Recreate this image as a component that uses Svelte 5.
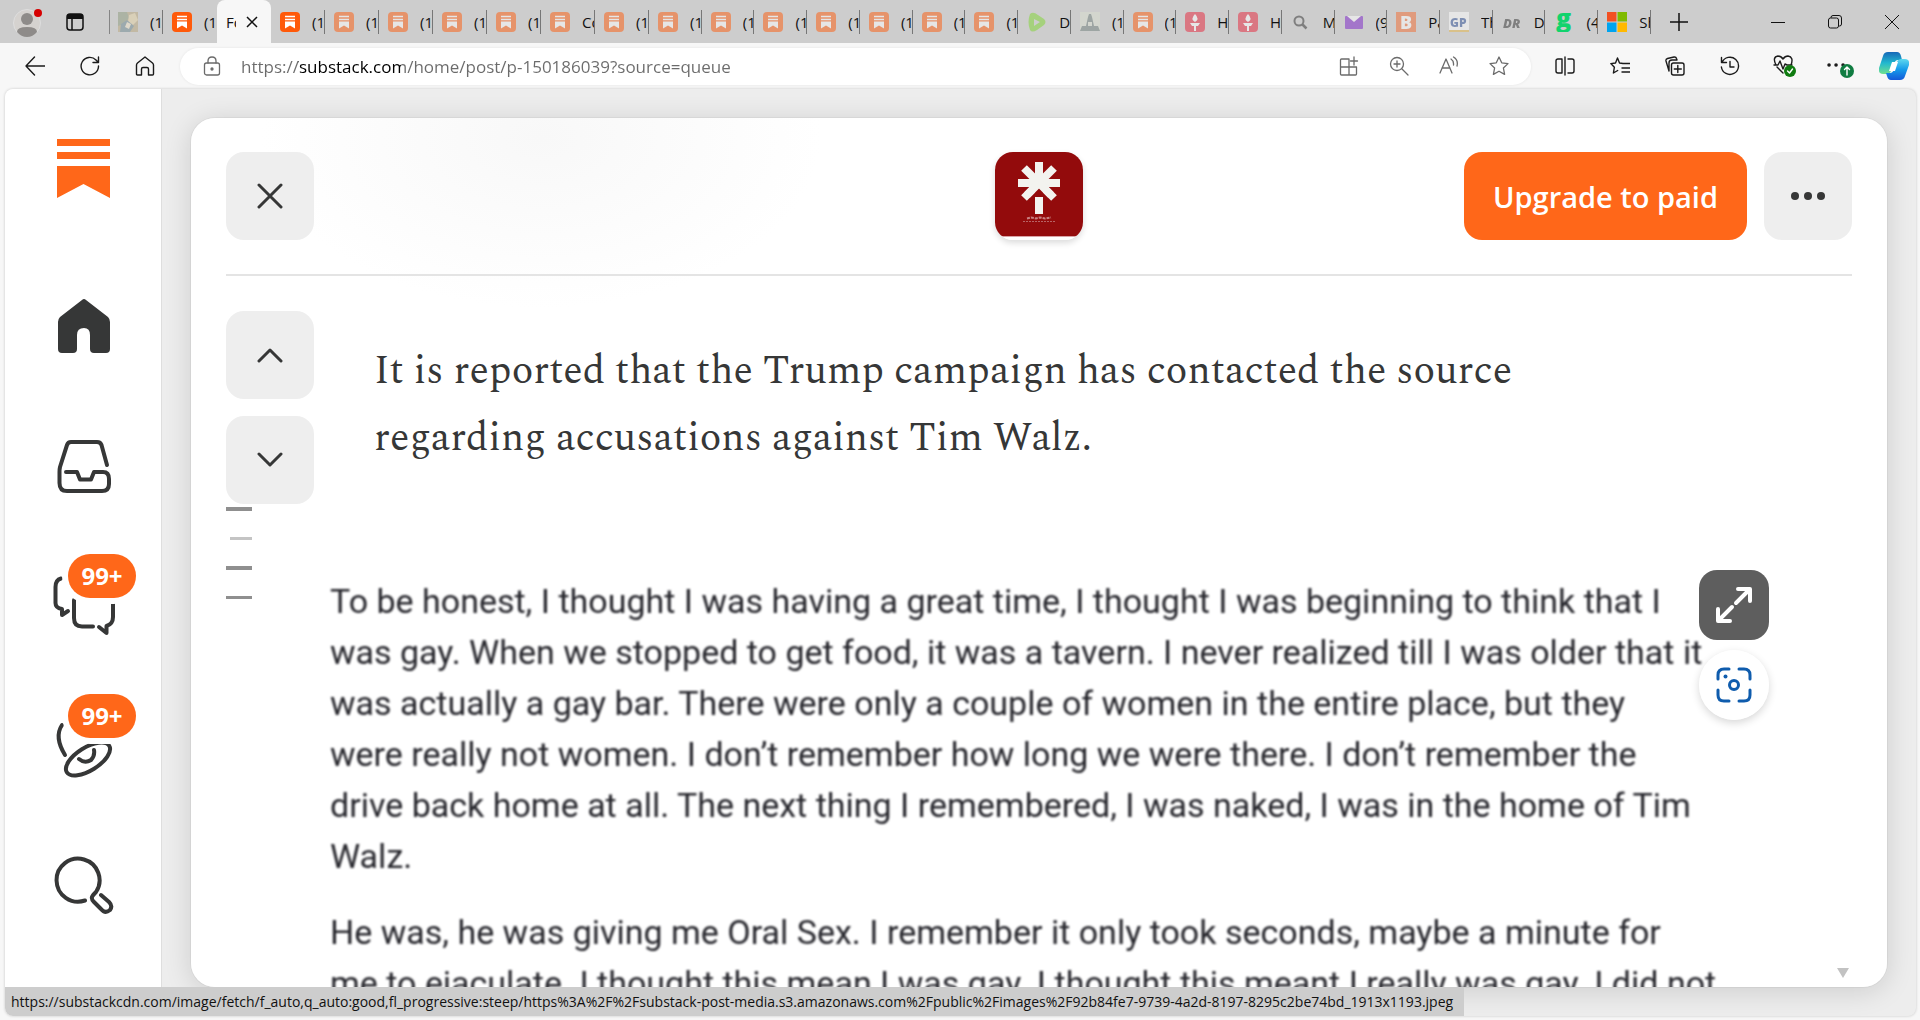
<script lang="ts">
  type Tab = { icon: string; label: string; awake?: boolean; wide?: boolean; active?: boolean };

  const tabs: Tab[] = [
    { icon: 'painting', label: '(1', wide: true },
    { icon: 'substack', label: '(1', awake: true, wide: true },
    { icon: '', label: 'Fo', active: true, wide: true },
    { icon: 'substack', label: '(1', awake: true, wide: true },
    { icon: 'substack', label: '(1', wide: true },
    { icon: 'substack', label: '(1', wide: true },
    { icon: 'substack', label: '(1', wide: true },
    { icon: 'substack', label: '(1', wide: true },
    { icon: 'substack', label: 'Co', wide: true },
    { icon: 'substack', label: '(1', wide: true },
    { icon: 'substack', label: '(1' },
    { icon: 'substack', label: '(1' },
    { icon: 'substack', label: '(1' },
    { icon: 'substack', label: '(1' },
    { icon: 'substack', label: '(1' },
    { icon: 'substack', label: '(1' },
    { icon: 'substack', label: '(1' },
    { icon: 'play', label: 'D' },
    { icon: 'statue', label: '(1' },
    { icon: 'substack', label: '(1' },
    { icon: 'torch', label: 'H' },
    { icon: 'torch', label: 'H' },
    { icon: 'search', label: 'M' },
    { icon: 'mail', label: '(9' },
    { icon: 'b', label: 'Pa' },
    { icon: 'gp', label: 'Th' },
    { icon: 'dr', label: 'D' },
    { icon: 'g', label: '(4', awake: true },
    { icon: 'windows', label: 'Sh', awake: true }
  ];

  const navItems = [
    { id: 'home', label: 'Home', badge: '' },
    { id: 'inbox', label: 'Inbox', badge: '' },
    { id: 'chat', label: 'Chat', badge: '99+' },
    { id: 'activity', label: 'Activity', badge: '99+' },
    { id: 'explore', label: 'Explore', badge: '' }
  ];

  const passages = [
    [
      'To be honest, I thought I was having a great time, I thought I was beginning to think that I',
      'was gay. When we stopped to get food, it was a tavern. I never realized till I was older that it',
      'was actually a gay bar. There were only a couple of women in the entire place, but they',
      'were really not women. I don’t remember how long we were there. I don’t remember the',
      'drive back home at all. The next thing I remembered, I was naked, I was in the home of Tim',
      'Walz.'
    ],
    [
      'He was, he was giving me Oral Sex. I remember it only took seconds, maybe a minute for',
      'me to ejaculate. I thought this mean I was gay. I thought this meant I really was gay. I did not'
    ]
  ];

  const statusUrl =
    'https://substackcdn.com/image/fetch/f_auto,q_auto:good,fl_progressive:steep/https%3A%2F%2Fsubstack-post-media.s3.amazonaws.com%2Fpublic%2Fimages%2F92b84fe7-9739-4a2d-8197-8295c2be74bd_1913x1193.jpeg';

  let address = 'https://substack.com/home/post/p-150186039?source=queue';
</script>

{#snippet favicon(name: string)}
  <svg class="favicon" viewBox="0 0 20 20" aria-hidden="true">
    {#if name === 'substack'}
      <rect width="20" height="20" rx="4" fill="#ff5a0a" />
      <path d="M5 4.5h10M5 7.5h10" stroke="#fff" stroke-width="1.5" />
      <path d="M5 9.5h10v7l-5-3-5 3z" fill="#fff" />
    {:else if name === 'painting'}
      <rect width="20" height="20" fill="#b9a77c" />
      <path d="M0 0h9l2 6-5 6-6 2z" fill="#8d9a7c" />
      <path d="M11 3l6-2 3 7-5 5-5-3z" fill="#e6d3a4" />
      <path d="M3 12l6-4 7 6-4 6H2z" fill="#6d8891" />
      <path d="M9 10l4 2-2 5-4-2z" fill="#efe4c8" />
    {:else if name === 'play'}
      <path d="M3 2q3-3 8 1l6 4q3 3 0 6l-7 5q-5 3-7 0Q0 10 3 2z" fill="#7fd62f" />
      <path d="M7 7l6 3-6 4z" fill="#cfcfcf" />
    {:else if name === 'statue'}
      <rect width="20" height="18" fill="#d9e0d0" />
      <path d="M9 2h2l1 3 2 9h4l2 5H0l2-5h4l2-9z" fill="#6e7e7a" />
      <path d="M8 10h4v4H8z" fill="#d9e0d0" />
    {:else if name === 'torch'}
      <rect width="20" height="20" rx="4" fill="#e8233a" />
      <path d="M10 2q5 5 0 8-5-3 0-8zM5 11h10l-2 3H7zM9 14h2v5H9z" fill="#fff" />
    {:else if name === 'search'}
      <circle cx="8" cy="9" r="4.500" fill="none" stroke="#333" stroke-width="2" />
      <path d="M11.500 12.500l4 4" stroke="#333" stroke-width="2.500" />
    {:else if name === 'mail'}
      <rect x="1" y="4" width="18" height="13" rx="1" fill="#7a22c9" />
      <path d="M3 4l7 6 7-6z" fill="#fff" />
    {:else if name === 'b'}
      <rect width="20" height="20" fill="#f46b30" />
      <text x="4" y="17" class="glyph" font-size="18" fill="#fff">B</text>
    {:else if name === 'gp'}
      <rect width="20" height="20" fill="#fff" />
      <path d="M0 19h20" stroke="#e5b64a" stroke-width="2" />
      <text x="1" y="15" class="glyph" font-size="12" fill="#31539a">GP</text>
    {:else if name === 'dr'}
      <text x="1" y="16" class="glyph" font-size="13" font-style="italic" fill="#333">DR</text>
    {:else if name === 'g'}
      <text x="2" y="15" class="glyph" font-size="25" fill="#12d36d">g</text>
    {:else if name === 'windows'}
      <path d="M0 0h9.500v9.500H0z" fill="#f25022" />
      <path d="M10.500 0H20v9.500h-9.500z" fill="#7fba00" />
      <path d="M0 10.500h9.500V20H0z" fill="#00a4ef" />
      <path d="M10.500 10.500H20V20h-9.500z" fill="#ffb900" />
    {/if}
  </svg>
{/snippet}

{#snippet navIcon(id: string)}
  <svg class="nav-icon" viewBox="0 0 64 64" aria-hidden="true">
    {#if id === 'home'}
      <path
        class="solid"
        d="M31 6Q33 4 35 6L57 23Q59 25 59 28V55Q59 59 55 59H43Q39 59 39 55V41Q39 34 33 34Q26 34 26 41V55Q26 59 22 59H11Q7 59 7 55V28Q7 25 9 23Z"
      />
    {:else if id === 'inbox'}
      <path d="M56 31L50.500 11Q49.500 8 46 8H20Q17 8 16 11L9 33Q8.500 35 8.500 38V49Q8.500 57 16 57H51Q58 57 58 50V45Q58 38 52 38H43L40 45.500H29L26 38H15" />
    {:else if id === 'chat'}
      <path d="M10 4.500Q4.500 6 4.500 13V29Q4.500 34 11 35V41L17 37" />
      <path d="M23 26V44Q23 52.500 31 52.500H42" />
      <path d="M62 20V43Q62 50 55.500 52V59L48 53" />
    {:else if id === 'activity'}
      <path d="M11 11Q3 23 14 41" />
      <ellipse cx="37" cy="45" rx="25" ry="11.500" transform="rotate(-32 37 45)" />
      <path d="M28 45Q34 50 40 46Q44 42 43 36" />
    {:else}
      <path d="M34 46.500A21.500 21.500 0 1 1 45 38C41 42 39 44 43 48L50 55Q54 60 59 56Q62 52 58 48L50 41" />
    {/if}
  </svg>
{/snippet}

<div class="browser">
  <div class="tabstrip">
    <button class="chrome-btn profile" aria-label="Profile">
      <svg width="32" height="32" viewBox="0 0 32 32">
        <circle cx="14" cy="17" r="13.500" fill="#d5d2cf" stroke="#dedede" />
        <circle cx="14" cy="13" r="6" fill="#8e8b89" />
        <path d="M4 26q0-5 10-5t10 5q-4 5-10 5t-10-5z" fill="#8e8b89" />
        <circle cx="25" cy="7" r="4" fill="#d60000" />
      </svg>
    </button>
    <button class="chrome-btn" aria-label="Tab actions">
      <svg width="20" height="20" viewBox="0 0 20 20">
        <rect x="2" y="2" width="16" height="16" rx="3" fill="none" stroke="#111" stroke-width="1.500" />
        <path d="M2 7V4q0-2 2-2h12q2 0 2 2v3z" fill="#111" />
        <path d="M7 7v11" stroke="#111" stroke-width="1.500" />
      </svg>
    </button>

    <div class="tabs" role="tablist">
      {#each tabs as tab, i}
        {#if tab.active}
          <div class="tab wide active" role="tab" aria-selected="true" tabindex="0">
            <span class="tab-label">{tab.label}</span>
            <button class="tab-close" aria-label="Close tab">
              <svg width="12" height="12" viewBox="0 0 12 12">
                <path d="M1 1l10 10M11 1L1 11" stroke="#111" stroke-width="1.500" />
              </svg>
            </button>
          </div>
        {:else}
          <button
            class="tab"
            class:wide={tab.wide}
            class:asleep={!tab.awake}
            class:no-line={tabs[i + 1]?.active}
            role="tab"
            aria-selected="false"
          >
            {@render favicon(tab.icon)}
            <span class="tab-label">{tab.label}</span>
          </button>
        {/if}
      {/each}
    </div>

    <button class="chrome-btn new-tab" aria-label="New tab">
      <svg width="18" height="18" viewBox="0 0 18 18"><path d="M9 0v18M0 9h18" stroke="#111" stroke-width="1.500" /></svg>
    </button>
    <div class="window-controls">
      <button aria-label="Minimize">
        <svg width="14" height="14" viewBox="0 0 14 14"><path d="M0 7.500h14" stroke="#111" /></svg>
      </button>
      <button aria-label="Restore">
        <svg width="14" height="14" viewBox="0 0 14 14" fill="none" stroke="#111">
          <rect x=".5" y="3" width="10" height="10" rx="2" />
          <path d="M3 3V2.500Q3 .5 5 .5h6q2.500 0 2.500 2.500v6q0 2-2 2H11" />
        </svg>
      </button>
      <button aria-label="Close">
        <svg width="14" height="14" viewBox="0 0 14 14"><path d="M0 0l14 14M14 0L0 14" stroke="#111" /></svg>
      </button>
    </div>
  </div>

  <div class="toolbar">
    <div class="nav-buttons">
      <button aria-label="Back">
        <svg class="tool" viewBox="0 0 20 20"><path d="M20 10H1M9.500 1L1 10l8.500 9" /></svg>
      </button>
      <button aria-label="Refresh">
        <svg class="tool" viewBox="0 0 20 20"><path d="M18.500 10A8.700 8.700 0 1 1 16 4l2.500 2.500M18.500 1v5.500H13" /></svg>
      </button>
      <button aria-label="Home">
        <svg class="tool" viewBox="0 0 20 20"><path d="M1.500 9q0-1 1-2L10 1l7.500 6q1 1 1 2v9q0 1-1 1h-4v-6q0-1.500-1.500-1.500H8Q6.500 11.500 6.500 13v6h-4q-1 0-1-1z" /></svg>
      </button>
    </div>

    <div class="address">
      <button aria-label="View site information">
        <svg class="tool grey" viewBox="0 0 20 20">
          <rect x="2.500" y="7" width="15" height="12" rx="2" />
          <path d="M6 7V5q0-4 4-4t4 4v2" />
          <circle cx="10" cy="13" r="1" fill="#666" />
        </svg>
      </button>
      <input type="text" aria-label="Address" bind:value={address} spellcheck="false" />
      <div class="address-actions">
        <button aria-label="App available">
          <svg class="tool grey" viewBox="0 0 20 20"><path d="M10 3H2.500Q1.500 3 1.500 4v14q0 1 1 1h14q1 0 1-1v-7h-16M10 3v16M15 1v8M11.500 5h7" /></svg>
        </button>
        <button aria-label="Zoom">
          <svg class="tool grey" viewBox="0 0 20 20"><circle cx="8" cy="8" r="6.500" /><path d="M13 13l6 6M8 5v6M5 8h6" /></svg>
        </button>
        <button aria-label="Read aloud">
          <svg class="tool grey" viewBox="0 0 20 20"><path d="M1 17L7 3l6 14M3 12h8M12 3q3 2 2.500 6M14.500 1q5 3 3.500 9" /></svg>
        </button>
        <button aria-label="Add to favorites">
          <svg class="tool grey" viewBox="0 0 20 20"><path d="M10 1l2.700 5.800 6.300.8-4.600 4.400 1.200 6.400L10 15.200l-5.600 3.200 1.200-6.400L1 7.600l6.300-.8z" /></svg>
        </button>
      </div>
    </div>

    <div class="extensions">
      <button aria-label="Split screen">
        <svg class="tool" viewBox="0 0 20 20"><path d="M7 3H3Q1 3 1 5v10q0 2 2 2h4zM10 1v18M13 3h4q2 0 2 2v10q0 2-2 2h-4" /></svg>
      </button>
      <button aria-label="Favorites">
        <svg class="tool" viewBox="0 0 20 20"><path d="M13 7.500L9.500 7 7.500 2 5.500 7 .8 7.600l3.600 3.600-1 5.800 4.300-2.500M13 7.500h7M12 12h8M12 16h8" /></svg>
      </button>
      <button aria-label="Collections">
        <svg class="tool" viewBox="0 0 20 20"><rect x="6.500" y="7" width="12.500" height="12" rx="2" /><path d="M12.800 9.500v7M9.300 13h7M4 15L1 5q-.4-2 1.500-2.500L9 1q2-.3 2.500 1.500L12 4H7Q4 4 4 7z" /></svg>
      </button>
      <button aria-label="History">
        <svg class="tool" viewBox="0 0 20 20"><path d="M2 6.500a8.600 8.600 0 1 1-.6 4.500M1.500 1.500v5h5M10 5.500V11h4" /></svg>
      </button>
      <button aria-label="Browser essentials">
        <svg class="tool badged" viewBox="0 0 24 24">
          <path d="M3 11Q-1 3 5 2q3 0 5 3 2-3 5-3 6 1 3 9M1 11h4l2-4 3 8 2-5 2 1h5M4 13l6 6" />
          <circle cx="17" cy="17" r="6" fill="#0f7b10" stroke="none" />
          <path d="M14.500 17l2 2 3-4" stroke="#fff" />
        </svg>
      </button>
      <button aria-label="Settings and more">
        <svg class="tool more" viewBox="0 0 28 24">
          <path d="M3 11h.1M10 11h.1M17 11h.1" stroke-width="3.500" />
          <circle cx="21" cy="17" r="7" fill="#107c41" stroke="none" />
          <path d="M21 21v-8M18.500 15.500L21 13l2.500 2.500" stroke="#fff" />
        </svg>
      </button>
      <button class="copilot" aria-label="Copilot">
        <svg width="30" height="28" viewBox="0 0 30 28">
          <defs>
            <linearGradient id="cpA" x1="0" y1="0" x2="0" y2="1">
              <stop offset="0" stop-color="#1668b8" />
              <stop offset=".5" stop-color="#22b8cf" />
              <stop offset="1" stop-color="#6fe08f" />
            </linearGradient>
            <linearGradient id="cpB" x1="0" y1="0" x2="0" y2="1">
              <stop offset="0" stop-color="#5fd9ee" />
              <stop offset=".5" stop-color="#159bea" />
              <stop offset="1" stop-color="#1459d8" />
            </linearGradient>
          </defs>
          <path d="M9 0h9q3 0 4 4l1 4h-4q-3 0-4 4l-3 7q-1 3-5 3H4q-5 0-4-6L4 4q1-4 5-4z" fill="url(#cpA)" />
          <path d="M21 28h-9q-3 0-4-4l-1-3h4q3 0 4-4l3-7q1-3 5-3h3q5 0 4 6l-4 11q-1 4-5 4z" fill="url(#cpB)" />
          <path d="M13 10h6l-3 9h-6z" fill="#fff" />
        </svg>
      </button>
    </div>
  </div>

  <div class="page">
    <nav class="sidebar" aria-label="Main">
      <a class="logo" href="#top" aria-label="Substack">
        <svg width="53" height="59" viewBox="0 0 53 59" fill="#ff6719">
          <path d="M0 0h53v7H0zM0 13h53v7H0zM0 27h53v32L26.500 45 0 59z" />
        </svg>
      </a>
      {#each navItems as item}
        <a class="nav-link" href="#{item.id}" aria-label={item.label}>
          {@render navIcon(item.id)}
          {#if item.badge}
            <span class="badge">{item.badge}</span>
          {/if}
        </a>
      {/each}
    </nav>

    <main class="reader">
      <header class="reader-header">
        <button class="square" aria-label="Close post">
          <svg width="26" height="26" viewBox="0 0 26 26"><path d="M2 2l22 22M24 2L2 24" /></svg>
        </button>
        <a class="publication" href="#publication" aria-label="Publication">
          <svg width="88" height="88" viewBox="0 0 88 88">
            <rect width="88" height="88" fill="#fff" />
            <path d="M0 0h88v84H0z" fill="#930b0c" />
            <path d="M0 84.500h88" stroke="#d9a3a6" />
            <path d="M44 10v21M23 31h42M29 16l30 30M59 16L29 46M44 45v17" stroke="#f3f3ef" stroke-width="8" />
            <path d="M32 66.500l4-1 5 1 4-1 5 1 6-1" stroke="#c98082" stroke-width="2" fill="none" stroke-dasharray="3 1" />
            <path d="M28 69.500h32" stroke="#b76365" stroke-dasharray="2 1" />
            <path d="M40 35h8v10h-8z" fill="#930b0c" />
            <path d="M44 31L32 43M44 31l12 12" stroke="#f3f3ef" stroke-width="8" />
          </svg>
        </a>
        <div class="header-actions">
          <button class="upgrade">Upgrade to paid</button>
          <button class="square" aria-label="More options">
            <svg width="34" height="8" viewBox="0 0 34 8" class="dots">
              <circle cx="4" cy="4" r="4" />
              <circle cx="17" cy="4" r="4" />
              <circle cx="30" cy="4" r="4" />
            </svg>
          </button>
        </div>
      </header>

      <div class="reader-body">
        <aside class="post-nav">
          <button class="square" aria-label="Previous post">
            <svg width="26" height="16" viewBox="0 0 26 16"><path d="M2 14L13 3l11 11" /></svg>
          </button>
          <button class="square" aria-label="Next post">
            <svg width="26" height="16" viewBox="0 0 26 16"><path d="M2 2l11 11L24 2" /></svg>
          </button>
          <div class="marks" aria-hidden="true">
            <span class="thick"></span>
            <span class="short"></span>
            <span class="thick"></span>
            <span></span>
          </div>
        </aside>

        <article>
          <p class="lead">
            It is reported that the Trump campaign has contacted the source<br />
            regarding accusations against Tim Walz.
          </p>
          <figure>
            <div class="scan">
              {#each passages as lines}
                <p>
                  {#each lines as line}
                    <span>{line}</span>
                  {/each}
                </p>
              {/each}
            </div>
            <div class="figure-tools">
              <button class="expand" aria-label="Expand image">
                <svg width="40" height="40" viewBox="0 0 40 40">
                  <path d="M22 18L35 5M24 4h12v12M18 22L5 35M4 24v12h12" />
                </svg>
              </button>
              <button class="lens" aria-label="Visual search">
                <svg width="36" height="36" viewBox="0 0 36 36">
                  <path d="M2 12V8q0-6 6-6h5M23 2h5q6 0 6 6v4M34 23v5q0 6-6 6h-5M13 34H8q-6 0-6-6v-5" />
                  <circle cx="18" cy="18" r="4.500" />
                  <circle cx="9.500" cy="9.500" r="2" class="dot" />
                </svg>
              </button>
            </div>
          </figure>
        </article>
      </div>
      <span class="scroll-arrow" aria-hidden="true"></span>
    </main>

    <div class="status">{statusUrl}</div>
  </div>
</div>

<style>
  :global(body) {
    background: #f7f7f7;
  }

  .browser {
    display: flex;
    flex-direction: column;
    height: 100vh;
    overflow: hidden;
    font-family: 'Segoe UI', 'Open Sans', 'Noto Sans', sans-serif;
    color: #363737;
  }

  button {
    display: flex;
    align-items: center;
    justify-content: center;
    padding: 0;
    border: 0;
    background: none;
    font: inherit;
    color: inherit;
    cursor: pointer;
  }

  svg {
    display: block;
    flex: none;
  }

  /* tab strip */
  .tabstrip {
    display: flex;
    align-items: center;
    height: 43px;
    padding-left: 13px;
    background: #cdcdcd;
  }

  .chrome-btn {
    flex: none;
    width: 32px;
    height: 32px;
  }

  .profile {
    margin-right: 14px;
  }

  .tabs {
    display: flex;
    flex: 1;
    align-self: stretch;
    min-width: 0;
    margin-left: 18px;
    position: relative;
  }

  .tabs::before {
    content: '';
    position: absolute;
    left: 0;
    top: 10px;
    width: 1px;
    height: 24px;
    background: #858585;
  }

  .tab {
    position: relative;
    flex: 1 1 0;
    justify-content: flex-start;
    gap: 12px;
    min-width: 0;
    padding-left: 9px;
    overflow: hidden;
    font-size: 15px;
    color: #111;
  }

  .tab.wide {
    flex: 0 0 54px;
    box-sizing: border-box;
  }

  .tab::after {
    content: '';
    position: absolute;
    right: 0;
    top: 10px;
    width: 1px;
    height: 24px;
    background: #777;
  }

  .tab.no-line::after,
  .tab.active::after {
    display: none;
  }

  .tab.active {
    display: flex;
    align-items: center;
    background: #f7f7f7;
    border-radius: 8px 8px 0 0;
    gap: 10px;
  }

  .active .tab-label {
    width: 10px;
  }

  .tab-label {
    overflow: hidden;
    white-space: nowrap;
  }

  .favicon {
    width: 20px;
    height: 20px;
  }

  .asleep .favicon {
    opacity: 0.5;
  }

  .glyph {
    font-family: 'Open Sans', sans-serif;
    font-weight: 800;
  }

  .new-tab {
    margin-left: 12px;
  }

  .window-controls {
    display: flex;
    flex: none;
    align-self: stretch;
    margin-left: 54px;
  }

  .window-controls button {
    width: 57px;
  }

  /* toolbar */
  .toolbar {
    display: flex;
    align-items: center;
    height: 46px;
    padding-left: 7px;
    background: #f7f7f7;
  }

  .nav-buttons,
  .extensions,
  .address-actions {
    display: flex;
    flex: none;
  }

  .nav-buttons {
    margin-right: 8px;
  }

  .nav-buttons button {
    width: 55px;
    height: 36px;
  }

  .tool {
    width: 20px;
    height: 20px;
    fill: none;
    stroke: #1b1b1b;
    stroke-width: 1.4;
    stroke-linecap: round;
    stroke-linejoin: round;
  }

  .tool.grey {
    stroke: #6b6b6b;
    stroke-width: 1.3;
  }

  .tool.badged {
    width: 24px;
    height: 24px;
  }

  .tool.more {
    width: 28px;
    height: 24px;
  }

  .address {
    display: flex;
    flex: 1;
    align-items: center;
    height: 37px;
    padding: 0 7px 0 14px;
    border-radius: 19px;
    background: #fff;
    box-shadow: 0 0 3px rgba(0, 0, 0, 0.08);
  }

  .address > button {
    width: 36px;
    height: 36px;
  }

  .address input {
    flex: 1;
    min-width: 0;
    margin-left: 11px;
    padding: 0;
    border: 0;
    outline: 0;
    font: inherit;
    font-size: 17px;
    color: transparent;
    background: linear-gradient(90deg, #6b6b6b 57px, #000 57px, #000 160px, #6b6b6b 160px);
    background-clip: text;
  }

  .address-actions button {
    width: 50px;
    height: 36px;
  }

  .extensions {
    margin-left: 6px;
  }

  .extensions button {
    width: 55px;
    height: 36px;
  }

  .extensions .copilot {
    width: 53px;
  }

  /* page */
  .page {
    position: relative;
    display: flex;
    flex: 1;
    min-height: 0;
    margin: 0 4px 4px 5px;
    border-radius: 8px;
    overflow: hidden;
    background: #ededed;
    box-shadow: 0 0 3px rgba(0, 0, 0, 0.2);
  }

  .sidebar {
    flex: none;
    width: 156px;
    background: #fff;
    border-right: 1px solid #dedede;
  }

  .logo {
    display: flex;
    justify-content: center;
    height: 117px;
    padding-top: 50px;
  }

  .nav-link {
    position: relative;
    display: flex;
    align-items: center;
    justify-content: center;
    height: 140px;
  }

  .nav-icon {
    width: 64px;
    height: 64px;
    fill: none;
    stroke: #363737;
    stroke-width: 4;
    stroke-linecap: round;
    stroke-linejoin: round;
  }

  .nav-icon .solid {
    fill: #363737;
    stroke: none;
  }

  .badge {
    position: absolute;
    top: 18px;
    left: 63px;
    width: 68px;
    height: 44px;
    border-radius: 22px;
    background: #ff6719;
    box-shadow: 0 0 0 6px #fff;
    color: #fff;
    font-size: 24px;
    font-weight: 700;
    line-height: 44px;
    text-align: center;
  }

  .reader {
    position: relative;
    display: flex;
    flex: 1;
    flex-direction: column;
    min-width: 0;
    margin: 29px;
    border-radius: 24px;
    background: radial-gradient(ellipse 280px 170px at 350px 20px, #f8f8f8, #fff);
    box-shadow:
      0 0 0 1px rgba(0, 0, 0, 0.04),
      0 4px 28px rgba(0, 0, 0, 0.14);
    overflow: hidden;
  }

  .reader-header {
    display: grid;
    grid-template-columns: 1fr auto 1fr;
    align-items: center;
    margin: 0 35px;
    padding: 34px 0;
    border-bottom: 2px solid #e4e4e4;
  }

  .square {
    width: 88px;
    height: 88px;
    border-radius: 18px;
    background: #eee;
  }

  .square svg {
    fill: none;
    stroke: #363737;
    stroke-width: 3;
    stroke-linecap: round;
    stroke-linejoin: round;
  }

  .square .dots {
    fill: #363737;
    stroke: none;
  }

  .publication {
    border-radius: 18px;
    overflow: hidden;
    box-shadow: 0 3px 6px rgba(0, 0, 0, 0.14);
  }

  .header-actions {
    display: flex;
    justify-content: flex-end;
    gap: 17px;
  }

  .upgrade {
    padding: 0 29px;
    border-radius: 18px;
    background: #ff6719;
    color: #fff;
    font-size: 29px;
    font-weight: 600;
    white-space: nowrap;
  }

  .reader-body {
    display: flex;
    flex: 1;
    min-height: 0;
    padding: 35px 35px 0;
  }

  .post-nav {
    display: flex;
    flex: none;
    flex-direction: column;
    gap: 17px;
  }

  .marks {
    display: flex;
    flex-direction: column;
    gap: 26px;
    margin-top: -14px;
  }

  .marks span {
    width: 26px;
    height: 3px;
    background: #8f8f8f;
  }

  .marks .thick {
    height: 4px;
  }

  .marks .short {
    width: 22px;
    margin-left: 4px;
    background: #c4c4c4;
  }

  article {
    flex: 1;
    min-width: 0;
    padding: 27px 0 0 16px;
  }

  .lead {
    margin: 0 0 0 44px;
    font-family: Spectral, 'Liberation Serif', serif;
    font-size: 40px;
    line-height: 67px;
    white-space: nowrap;
  }

  figure {
    position: relative;
    margin: 104px 0 0;
  }

  .scan {
    font-family: Roboto, sans-serif;
    font-size: 34px;
    line-height: 51px;
    color: #26262c;
    filter: blur(1px);
    white-space: nowrap;
  }

  .scan p {
    margin: 0 0 25px;
  }

  .scan span {
    display: block;
  }

  /* buttons floating over the image */
  .figure-tools {
    position: absolute;
    top: -6px;
    right: 83px;
    display: flex;
    flex-direction: column;
    gap: 10px;
  }

  .expand,
  .lens {
    width: 70px;
    height: 70px;
  }

  .expand {
    border-radius: 18px;
    background: #5e5e5e;
  }

  .expand svg,
  .lens svg {
    fill: none;
    stroke: #fff;
    stroke-width: 4;
    stroke-linecap: round;
    stroke-linejoin: round;
  }

  .lens {
    border-radius: 50%;
    background: rgba(255, 255, 255, 0.85);
    box-shadow: 0 3px 8px rgba(0, 0, 0, 0.16);
  }

  .lens svg {
    stroke: #0f5cad;
    stroke-width: 3;
  }

  .lens .dot {
    fill: #0f5cad;
    stroke: none;
  }

  .scroll-arrow {
    position: absolute;
    right: 38px;
    bottom: 9px;
    border: 6px solid transparent;
    border-top: 10px solid #c2c2c2;
    border-bottom: 0;
  }

  .status {
    position: absolute;
    left: 0;
    bottom: 0;
    height: 29px;
    padding: 0 11px 0 6px;
    background: #cdcdcd;
    color: #111;
    font-size: 14px;
    line-height: 29px;
    white-space: nowrap;
  }
</style>
